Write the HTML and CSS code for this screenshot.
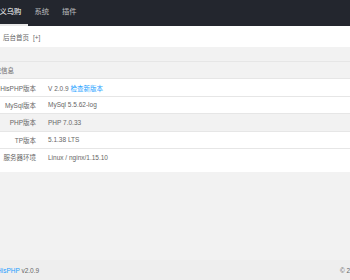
FILE: index.html
```html
<!DOCTYPE html>
<html lang="zh-CN">
<head>
  <meta charset="UTF-8">
  <title>后台首页</title>
  <link rel="stylesheet" href="styles.css">
</head>
<body>
  <div class="header">
    <ul class="nav">
      <li class="nav-item active">义乌购</li>
      <li class="nav-item">系统</li>
      <li class="nav-item">插件</li>
    </ul>
  </div>

  <div class="tabs">
    <span class="tab">后台首页</span>
    <span class="tab-add">[+]</span>
  </div>

  <div class="main">
    <table class="info">
      <thead>
        <tr><th colspan="2"><span class="title">系统信息</span></th></tr>
      </thead>
      <tbody>
        <tr><td class="label">HisPHP版本</td><td>V 2.0.9 <a href="#">检查新版本</a></td></tr>
        <tr><td class="label">MySql版本</td><td>MySql 5.5.62-log</td></tr>
        <tr class="hover"><td class="label">PHP版本</td><td>PHP 7.0.33</td></tr>
        <tr><td class="label">TP版本</td><td>5.1.38 LTS</td></tr>
        <tr><td class="label">服务器环境</td><td>Linux / nginx/1.15.10</td></tr>
      </tbody>
    </table>
  </div>

  <div class="footer">
    <span class="copy"><a href="#">HisPHP</a> v2.0.9</span>
    <span class="right">© 2019</span>
  </div>
</body>
</html>
```

FILE: styles.css
```css
html, body {
  margin: 0;
  height: 100%;
  overflow: hidden;
}
body {
  font-family: "Liberation Sans", "Noto Sans CJK SC", sans-serif;
  font-size: 6.5px;
  color: #666;
  background-color: #f2f2f2;
  display: flex;
  flex-direction: column;
}
a {
  color: #1E9FFF;
  text-decoration: none;
}
.header {
  height: 26px;
  background-color: #23262e;
  flex-shrink: 0;
}
.nav {
  list-style: none;
  margin: 0 0 0 -7px;
  padding: 0;
  display: flex;
  height: 26px;
}
.nav-item {
  padding: 0 6.5px;
  line-height: 24px;
  font-size: 7.3px;
  color: rgba(255, 255, 255, 0.7);
  border-bottom: 2px solid transparent;
}
.nav-item.active {
  color: #fff;
  border-bottom-color: #e8e8e8;
}
.tabs {
  height: 21px;
  background-color: #fff;
  display: flex;
  align-items: center;
  gap: 4px;
  padding: 1px 0 0 3px;
  box-sizing: border-box;
  flex-shrink: 0;
}
.main {
  flex: 1;
  padding-top: 14px;
}
.info {
  width: 100%;
  border-collapse: collapse;
  background-color: #fff;
  border-bottom: 7px solid #fff;
}
.info th,
.info td {
  height: 16.4px;
  padding: 0;
  border-top: 1px solid #e6e6e6;
  font-weight: normal;
  text-align: left;
}
.info th {
  background-color: #f2f2f2;
}
.title {
  margin-left: -12px;
}
.info td.label {
  width: 36px;
  padding-right: 5px;
  text-align: right;
  white-space: nowrap;
}
.info td + td {
  padding-left: 7px;
}
.info tr.hover td {
  background-color: #f2f2f2;
}
.footer {
  height: 20px;
  background-color: #eee;
  display: flex;
  align-items: center;
  justify-content: space-between;
  margin-left: -3px;
  margin-right: -11px;
  flex-shrink: 0;
}
```
